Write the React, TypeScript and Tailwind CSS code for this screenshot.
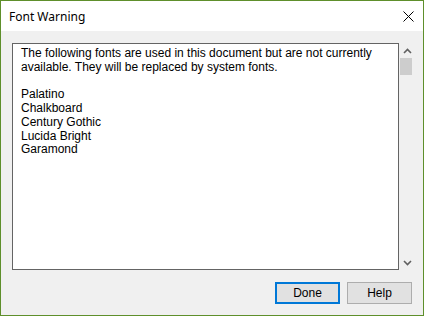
export default function App() {
  const fonts = ["Palatino", "Chalkboard", "Century Gothic", "Lucida Bright", "Garamond"];

  return (
    <div className="w-[424px] h-[316px] flex flex-col border border-[#5e8f2b] bg-[#f0f0f0] overflow-hidden">
      {/* title bar */}
      <div className="h-[30px] bg-white flex items-center justify-between pl-[8px] pr-[9px]">
        <span className="text-[12px] text-black font-['Noto_Sans',sans-serif] pt-[1px]">
          Font Warning
        </span>
        <svg width="11" height="11" viewBox="0 0 11 11" className="mt-[1px]">
          <path d="M0.5 0.5 L10.5 10.5 M10.5 0.5 L0.5 10.5" stroke="#000" strokeWidth="1" />
        </svg>
      </div>

      <div className="flex-1 flex flex-col pl-[11px] pr-[8px] pt-[12px] pb-[11px]">
        <div className="flex h-[227px]">
          <div className="w-[387px] h-full bg-white border border-[#646464] pl-[8px] pr-[6px] pt-[3px] font-['Liberation_Sans',Arial,sans-serif] text-[12px] leading-[13.75px] text-black">
            <p>
              The following fonts are used in this document but are not currently
              available. They will be replaced by system fonts.
            </p>
            <div className="mt-[13.75px]">
              {fonts.map((f) => (
                <div key={f}>{f}</div>
              ))}
            </div>
          </div>
          {/* scrollbar */}
          <div className="w-[15px] h-full flex flex-col">
            <div className="h-[15px] flex items-center justify-center">
              <svg width="9" height="6" viewBox="0 0 9 6" className="ml-[1px]">
                <path d="M1 5 L4.5 1.5 L8 5" fill="none" stroke="#606060" strokeWidth="1.6" />
              </svg>
            </div>
            <div className="h-[17px] ml-[1px] mr-[2px] bg-[#cdcdcd]" />
            <div className="flex-1" />
            <div className="h-[15px] flex items-center justify-center">
              <svg width="9" height="6" viewBox="0 0 9 6" className="ml-[1px]">
                <path d="M1 1 L4.5 4.5 L8 1" fill="none" stroke="#606060" strokeWidth="1.6" />
              </svg>
            </div>
          </div>
        </div>

        <div className="mt-[12px] flex justify-end gap-[7px] pr-[3px] font-['Liberation_Sans',Arial,sans-serif] text-[12px] text-black">
          <button className="w-[65px] h-[22px] bg-[#e1e1e1] border-2 border-[#0078d7]">
            Done
          </button>
          <button className="w-[65px] h-[22px] bg-[#e1e1e1] border border-[#adadad]">
            Help
          </button>
        </div>
      </div>
    </div>
  );
}
